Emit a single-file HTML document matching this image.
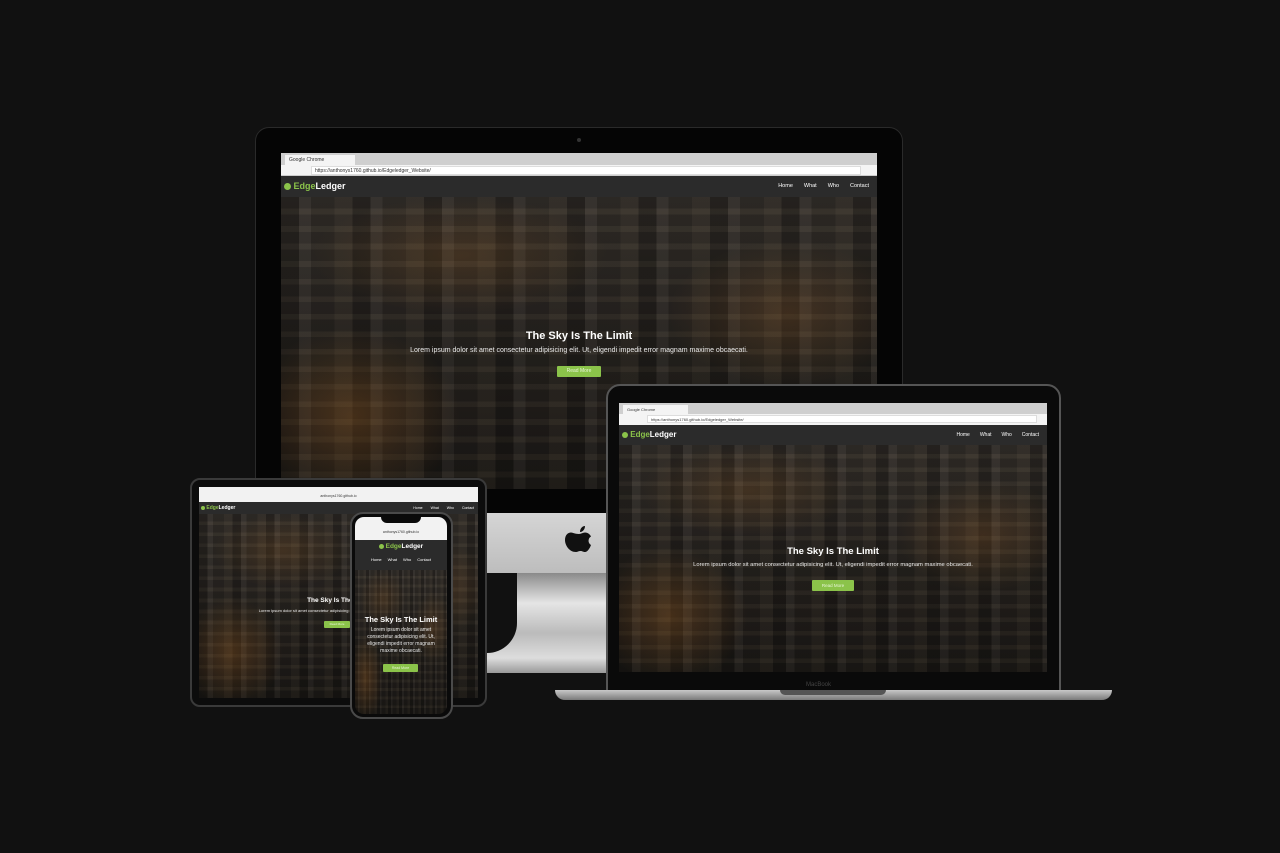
<!DOCTYPE html>
<html><head><meta charset="utf-8"><style>
*{margin:0;padding:0;box-sizing:border-box}
body{width:1280px;height:853px;background:#111;position:relative;overflow:hidden;font-family:"Liberation Sans",sans-serif}
.a{position:absolute}
.city{background:
radial-gradient(ellipse 18% 30% at 12% 75%,rgba(200,120,40,.25),transparent),
radial-gradient(ellipse 20% 25% at 85% 40%,rgba(190,120,50,.2),transparent),
radial-gradient(ellipse 25% 20% at 30% 20%,rgba(180,110,40,.18),transparent),
repeating-linear-gradient(90deg,rgba(0,0,0,.25) 0 3%,rgba(255,255,255,.03) 3% 5%,rgba(0,0,0,.1) 5% 9%,rgba(90,80,60,.08) 9% 12%),
repeating-linear-gradient(0deg,rgba(0,0,0,.12) 0 4%,rgba(255,220,150,.03) 4% 6%),
linear-gradient(180deg,#37322d,#2a2622 50%,#1e1b18);overflow:hidden}
.nav{background:#2b2b2b;color:#fff}
.logo{color:#fff;font-weight:bold;white-space:nowrap}
.logo b{color:#8bc34a}
.dot{display:inline-block;border-radius:50%;background:#8bc34a;vertical-align:middle}
.btn{background:#8bc34a;color:#e8f5d8;text-align:center;border-radius:1px}
.t{color:#fff;text-align:center;white-space:nowrap;font-weight:bold}
.s{color:#e8e8e8;text-align:center;white-space:nowrap}
.links{white-space:nowrap;color:#fff}
.links span{margin-left:var(--g)}
</style></head><body>

<!-- iMac -->
<div class="a" style="left:255px;top:127px;width:648px;height:388px;background:#050505;border-radius:14px 14px 0 0;border:1px solid #2a2a2a"></div>
<div class="a" style="left:577px;top:138px;width:4px;height:4px;border-radius:50%;background:#333"></div>
<div class="a" style="left:255px;top:513px;width:648px;height:60px;background:linear-gradient(180deg,#d5d5d5,#bdbdbd)"></div>
<svg class="a" style="left:565px;top:526px" width="28" height="33" viewBox="0 0 28 33"><path d="M20 0c0 3-2 6-5 6 0-3 2-6 5-6zM14 8c2 0 4-1.5 6-1.5 3 0 5 2 6 4-3 1.5-3.5 6.5 0 8.5-1 3-3.5 7-6 7-2 0-2.5-1-4.5-1s-3 1-4.5 1C4 26 0 19 0 14c0-5 3-7.5 6-7.5 2 0 3.5 1.5 8 1.5z" fill="#111"/></svg>
<div class="a" style="left:487px;top:573px;width:120px;height:100px;background:linear-gradient(180deg,#8a8a8a,#e5e5e5 30%,#bbb 60%,#ddd 85%,#999)"></div>
<div class="a" style="left:487px;top:573px;width:30px;height:80px;background:#111;border-radius:0 0 30px 0"></div>
<!-- iMac screen -->
<div class="a" style="left:281px;top:153px;width:596px;height:336px;background:#000">
 <div class="a" style="left:0;top:0;width:596px;height:12px;background:#cfcfcf"></div>
 <div class="a" style="left:4px;top:2px;width:70px;height:10px;background:#f4f4f4;font-size:5px;padding:2px 4px;color:#333">Google Chrome</div>
 <div class="a" style="left:0;top:12px;width:596px;height:11px;background:#f4f4f4;border-bottom:1px solid #ccc"></div>
 <div class="a" style="left:30px;top:13px;width:550px;height:9px;background:#fff;border:1px solid #ddd;font-size:5px;padding:1px 3px;color:#333">https://anthonys1760.github.io/Edgeledger_Website/</div>
 <div class="a nav" style="left:0;top:23px;width:596px;height:21px">
  <div class="a logo" style="left:3px;top:5px;font-size:9px"><span class="dot" style="width:7px;height:7px"></span> <b>Edge</b>Ledger</div>
  <div class="a links" style="right:8px;top:7px;font-size:5.5px;--g:11px"><span>Home</span><span>What</span><span>Who</span><span>Contact</span></div>
 </div>
 <div class="a city" style="left:0;top:44px;width:596px;height:292px">
  <div class="a t" style="left:0;width:596px;top:133px;font-size:11px">The Sky Is The Limit</div>
  <div class="a s" style="left:0;width:596px;top:150px;font-size:7px">Lorem ipsum dolor sit amet consectetur adipisicing elit. Ut, eligendi impedit error magnam maxime obcaecati.</div>
  <div class="a btn" style="left:276px;top:169px;width:44px;height:11px;font-size:5px;line-height:11px">Read More</div>
 </div>
</div>

<!-- Laptop -->
<div class="a" style="left:606px;top:384px;width:455px;height:308px;background:#0a0a0a;border-radius:14px 14px 0 0;border:2px solid #555"></div>
<div class="a" style="left:555px;top:690px;width:557px;height:10px;background:linear-gradient(180deg,#c8c8c8,#7a7a7a);border-radius:0 0 40px 40px"></div>
<div class="a" style="left:780px;top:690px;width:106px;height:5px;background:#555;border-radius:0 0 5px 5px"></div>
<div class="a" style="left:806px;top:682px;font-size:6px;color:#444">MacBook</div>
<div class="a" style="left:619px;top:403px;width:428px;height:269px">
 <div class="a" style="left:0;top:0;width:428px;height:11px;background:#cfcfcf"></div>
 <div class="a" style="left:4px;top:2px;width:65px;height:9px;background:#f4f4f4;font-size:4px;padding:2px 4px;color:#333">Google Chrome</div>
 <div class="a" style="left:0;top:11px;width:428px;height:11px;background:#f4f4f4"></div>
 <div class="a" style="left:28px;top:12px;width:390px;height:8px;background:#fff;border:1px solid #ddd;font-size:4px;padding:1px 3px;color:#333">https://anthonys1760.github.io/Edgeledger_Website/</div>
 <div class="a nav" style="left:0;top:22px;width:428px;height:20px">
  <div class="a logo" style="left:3px;top:5px;font-size:8px"><span class="dot" style="width:6px;height:6px"></span> <b>Edge</b>Ledger</div>
  <div class="a links" style="right:8px;top:7px;font-size:5px;--g:10px"><span>Home</span><span>What</span><span>Who</span><span>Contact</span></div>
 </div>
 <div class="a city" style="left:0;top:42px;width:428px;height:227px">
  <div class="a t" style="left:0;width:428px;top:101px;font-size:9.5px">The Sky Is The Limit</div>
  <div class="a s" style="left:0;width:428px;top:117px;font-size:5.8px">Lorem ipsum dolor sit amet consectetur adipisicing elit. Ut, eligendi impedit error magnam maxime obcaecati.</div>
  <div class="a btn" style="left:193px;top:135px;width:42px;height:11px;font-size:4.5px;line-height:11px">Read More</div>
 </div>
</div>

<!-- Tablet -->
<div class="a" style="left:190px;top:478px;width:297px;height:229px;background:#0c0c0c;border:2px solid #3a3a3a;border-radius:10px"></div>
<div class="a" style="left:199px;top:487px;width:279px;height:211px;overflow:hidden">
 <div class="a" style="left:0;top:0;width:279px;height:15px;background:#f2f2f2;font-size:3.5px;color:#333;text-align:center;padding-top:7px">anthonys1760.github.io</div>
 <div class="a nav" style="left:0;top:15px;width:279px;height:12px">
  <div class="a logo" style="left:2px;top:3px;font-size:5px"><span class="dot" style="width:4px;height:4px"></span> <b>Edge</b>Ledger</div>
  <div class="a links" style="right:4px;top:4px;font-size:3.5px;--g:8px"><span>Home</span><span>What</span><span>Who</span><span>Contact</span></div>
 </div>
 <div class="a city" style="left:0;top:27px;width:279px;height:184px">
  <div class="a t" style="left:0;width:279px;top:83px;font-size:6.5px">The Sky Is The Limit</div>
  <div class="a s" style="left:0;width:279px;top:94px;font-size:4px">Lorem ipsum dolor sit amet consectetur adipisicing elit. Ut, eligendi impedit error magnam.</div>
  <div class="a btn" style="left:125px;top:107px;width:26px;height:7px;font-size:3px;line-height:7px">Read More</div>
 </div>
</div>

<!-- Phone -->
<div class="a" style="left:350px;top:512px;width:103px;height:207px;background:#0a0a0a;border:2px solid #4a4a4a;border-radius:13px"></div>
<div class="a" style="left:355px;top:517px;width:92px;height:197px;overflow:hidden;border-radius:9px">
 <div class="a" style="left:0;top:0;width:92px;height:23px;background:#f2f2f2;font-size:3.5px;color:#333;text-align:center;padding-top:13px">anthonys1760.github.io</div>
 <div class="a" style="left:26px;top:0;width:40px;height:6px;background:#0a0a0a;border-radius:0 0 6px 6px"></div>
 <div class="a nav" style="left:0;top:23px;width:92px;height:30px">
  <div class="a logo" style="left:0;width:92px;text-align:center;top:3px;font-size:6.5px"><span class="dot" style="width:5px;height:5px"></span> <b>Edge</b>Ledger</div>
  <div class="a links" style="left:0;width:92px;text-align:center;top:17px;font-size:4px;--g:6px;padding-right:6px"><span>Home</span><span>What</span><span>Who</span><span>Contact</span></div>
 </div>
 <div class="a city" style="left:0;top:53px;width:92px;height:144px">
  <div class="a t" style="left:0;width:92px;top:45px;font-size:7.5px">The Sky Is The Limit</div>
  <div class="a s" style="left:0;width:92px;top:57px;font-size:5px;line-height:7px;white-space:normal;padding:0 4px">Lorem ipsum dolor sit amet consectetur adipisicing elit. Ut, eligendi impedit error magnam maxime obcaecati.</div>
  <div class="a btn" style="left:28px;top:94px;width:35px;height:8px;font-size:3.5px;line-height:8px">Read More</div>
 </div>
</div>
</body></html>
